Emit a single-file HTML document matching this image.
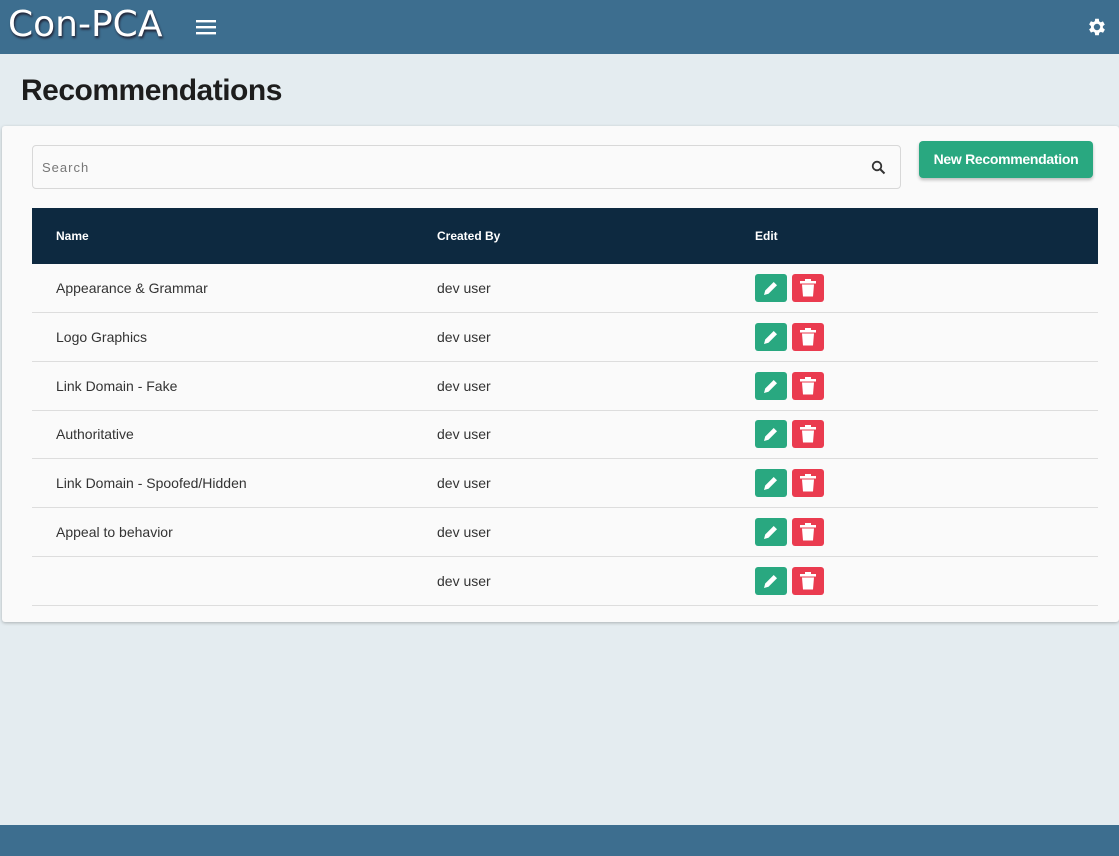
<!DOCTYPE html><html><head><style>
body{margin:0;width:1119px;height:856px;background:#e4ecf0;font-family:"Liberation Sans",sans-serif;position:relative;overflow:hidden}
.top{position:absolute;left:0;top:0;width:1119px;height:54px;background:#3d6e8f}
.logo{position:absolute;left:8px;top:4px;font-size:36px;color:#fff;letter-spacing:0px;font-family:"DejaVu Sans",sans-serif;font-weight:normal;text-shadow:1px 2px 2px #223}
.bot{position:absolute;left:0;top:825px;width:1119px;height:31px;background:#3d6e8f}
h1{position:absolute;left:21px;top:74px;margin:0;font-size:30px;font-weight:bold;color:#1d1d1d;letter-spacing:-0.5px}
.card{position:absolute;left:2px;top:126px;width:1117px;height:496px;background:#fafafa;box-shadow:0 1px 3px rgba(0,0,0,.25);border-radius:3px}
.search{position:absolute;left:30px;top:19px;width:867px;height:42px;border:1px solid #d8d8d8;border-radius:4px;background:#fafafa}
.search span{position:absolute;left:9px;top:14px;font-size:13px;color:#777;letter-spacing:1px}
.btn{position:absolute;left:917px;top:15px;width:174px;height:37px;background:#29a880;color:#fff;font-weight:bold;font-size:14px;text-align:center;line-height:37px;border-radius:4px;box-shadow:0 2px 3px rgba(0,0,0,.25);letter-spacing:-0.3px}
.th{position:absolute;left:30px;top:82px;width:1066px;height:56px;background:#0d2940;color:#fff;font-size:12px;font-weight:bold}
.th span,.row span{position:absolute}
.row{position:absolute;left:32px;width:1066px;height:48px;border-bottom:1px solid #ddd;font-size:14px;color:#333}
.e{position:absolute;top:10px;width:32px;height:28px;border-radius:3px}
</style></head><body>
<div class="top"><div class="logo">Con-PCA</div>
<svg style="position:absolute;left:196px;top:19px" width="20" height="16"><rect y="1" width="20" height="2.4" fill="#fff"/><rect y="7" width="20" height="2.4" fill="#fff"/><rect y="13" width="20" height="2.4" fill="#fff"/></svg>
<svg style="position:absolute;left:1086px;top:16px" width="22" height="22" viewBox="0 0 24 24"><path fill="#fff" d="M19.4 13a7.6 7.6 0 000-2l2.1-1.6-2-3.5-2.5 1a7 7 0 00-1.7-1L15 3h-4l-.4 2.7a7 7 0 00-1.7 1l-2.5-1-2 3.5L6.5 11a7.6 7.6 0 000 2l-2.1 1.6 2 3.5 2.5-1a7 7 0 001.7 1L11 21h4l.4-2.7a7 7 0 001.7-1l2.5 1 2-3.5zM13 15.5a3.5 3.5 0 110-7 3.5 3.5 0 010 7z" transform="translate(-1 0)"/></svg>
</div>
<div class="bot"></div>
<h1>Recommendations</h1>
<div class="card">
<div class="search"><span>Search</span><svg style="position:absolute;left:838px;top:14px" width="15" height="15" viewBox="0 0 15 15"><circle cx="6" cy="6" r="4.3" stroke="#333" stroke-width="1.8" fill="none"/><path d="M9 9l4.5 4.5" stroke="#333" stroke-width="2"/></svg></div>
<div class="btn">New Recommendation</div>
<div class="th"><span style="left:24px;top:21px">Name</span><span style="left:405px;top:21px">Created By</span><span style="left:723px;top:21px">Edit</span></div>
</div>
<div id="rows"></div>
<script>
var n=["Appearance &amp; Grammar","Logo Graphics","Link Domain - Fake","Authoritative","Link Domain - Spoofed/Hidden","Appeal to behavior",""];
var h="";n.forEach(function(t,i){var y=264+i*48.8;h+='<div class="row" style="top:'+y+'px"><span style="left:24px;top:16px">'+t+'</span><span style="left:405px;top:16px">dev user</span><div class="e" style="left:723px;background:#29a880"><svg width="32" height="28"><path d="M9 21l1.2-4.5 8.5-8.5 3.3 3.3-8.5 8.5z" fill="#fff"/></svg></div><div class="e" style="left:760px;background:#ea3b4f"><svg width="32" height="28"><rect x="8" y="7" width="16" height="2.5" fill="#fff"/><rect x="13" y="5" width="6" height="2.5" fill="#fff"/><path d="M10 10.5h12l-1 12h-10z" fill="#fff"/></svg></div></div>'});
document.getElementById("rows").innerHTML=h;
</script>
</body></html>
